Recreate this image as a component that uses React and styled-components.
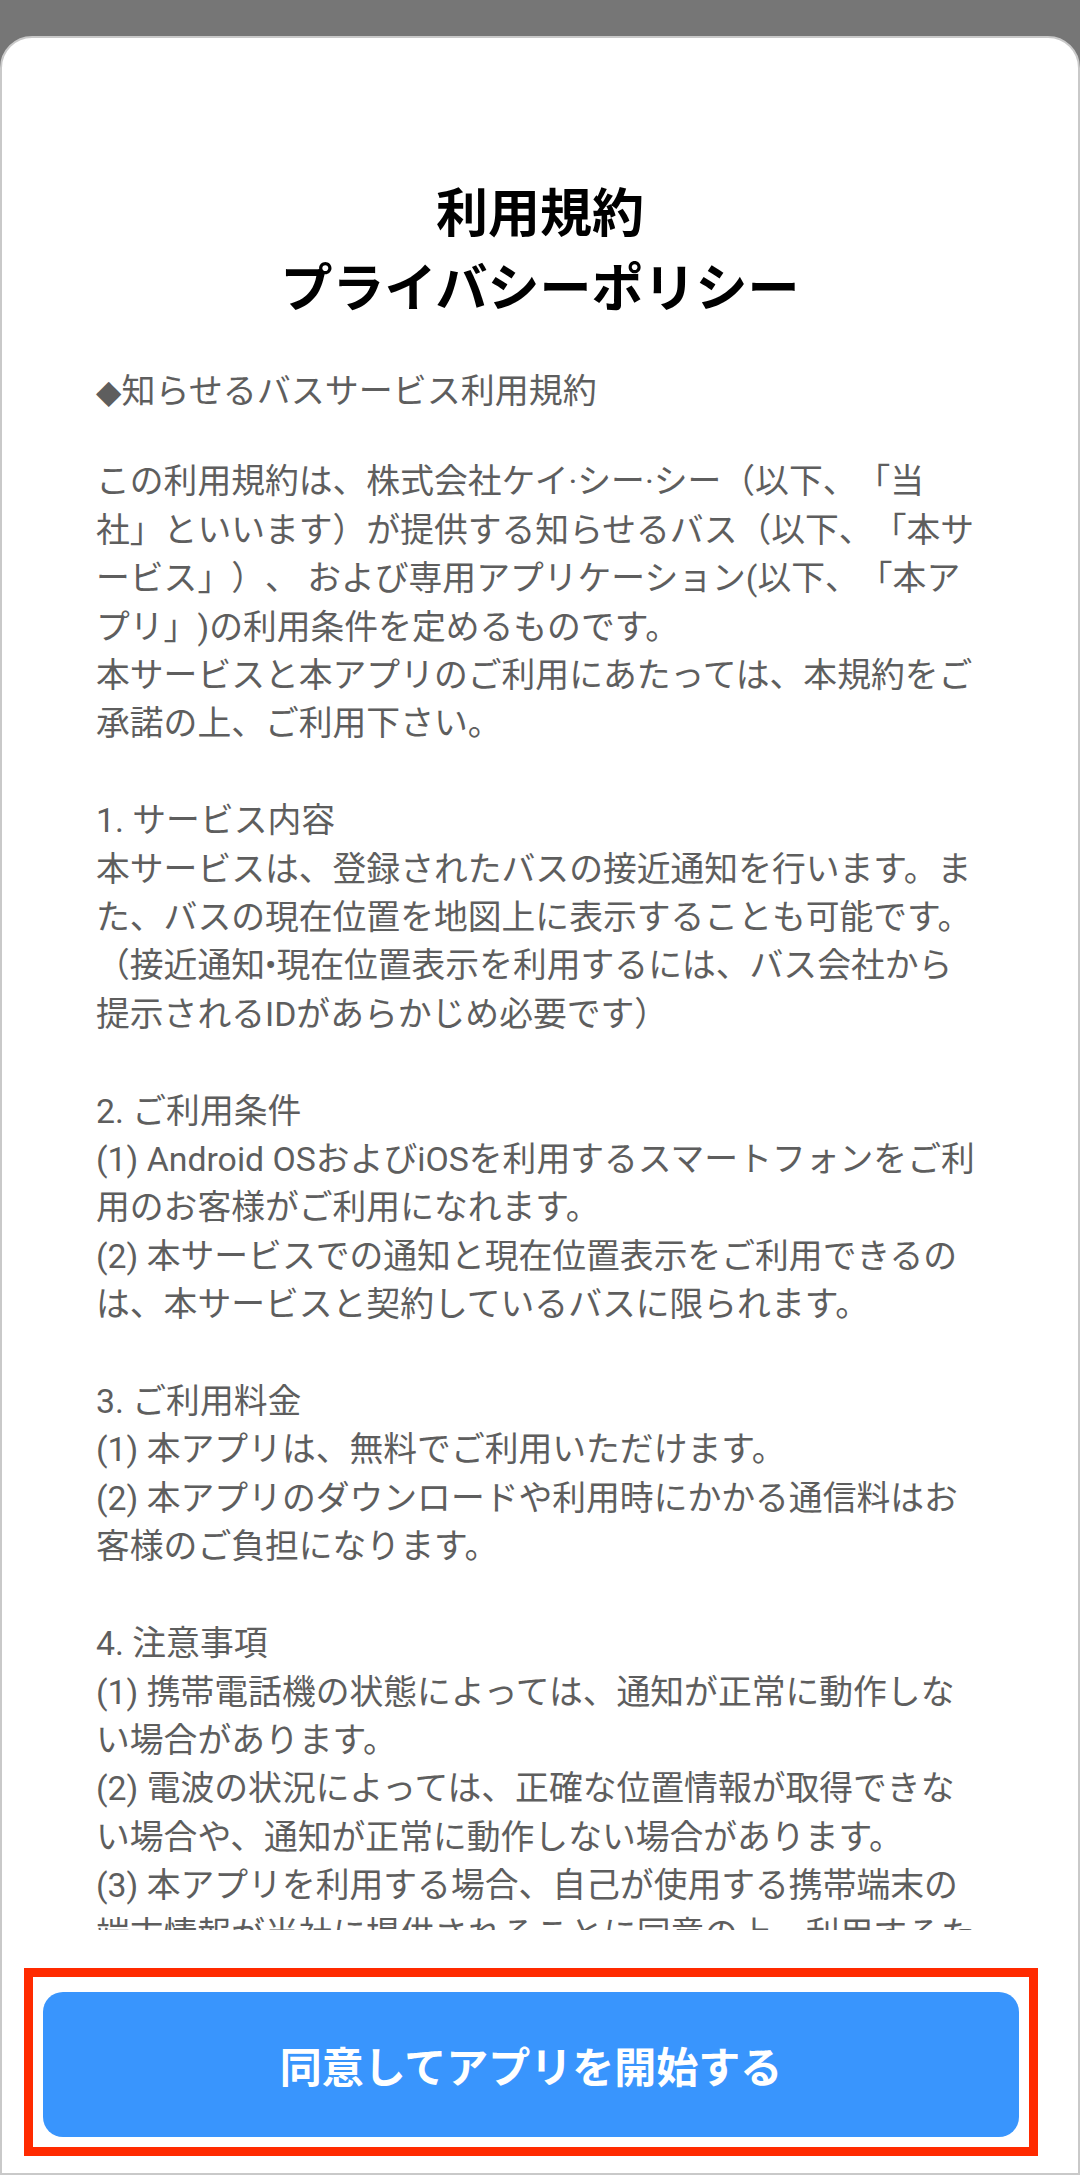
import React from "react";
import styled, { createGlobalStyle } from "styled-components";

const GlobalStyle = createGlobalStyle`
  html, body {
    margin: 0;
    padding: 0;
  }
  body {
    font-family: Roboto, "Noto Sans CJK JP", sans-serif;
    text-spacing-trim: space-all;
  }
`;

const sections = [
  [
    "この利用規約は、株式会社ケイ·シー·シー（以下、「当",
    "社」といいます）が提供する知らせるバス（以下、「本サ",
    "ービス」）、 および専用アプリケーション(以下、「本ア",
    "プリ」)の利用条件を定めるものです。",
    "本サービスと本アプリのご利用にあたっては、本規約をご",
    "承諾の上、ご利用下さい。",
  ],
  [
    "1. サービス内容",
    "本サービスは、登録されたバスの接近通知を行います。ま",
    "た、バスの現在位置を地図上に表示することも可能です。",
    "（接近通知•現在位置表示を利用するには、バス会社から",
    "提示されるIDがあらかじめ必要です）",
  ],
  [
    "2. ご利用条件",
    "(1) Android OSおよびiOSを利用するスマートフォンをご利",
    "用のお客様がご利用になれます。",
    "(2) 本サービスでの通知と現在位置表示をご利用できるの",
    "は、本サービスと契約しているバスに限られます。",
  ],
  [
    "3. ご利用料金",
    "(1) 本アプリは、無料でご利用いただけます。",
    "(2) 本アプリのダウンロードや利用時にかかる通信料はお",
    "客様のご負担になります。",
  ],
  [
    "4. 注意事項",
    "(1) 携帯電話機の状態によっては、通知が正常に動作しな",
    "い場合があります。",
    "(2) 電波の状況によっては、正確な位置情報が取得できな",
    "い場合や、通知が正常に動作しない場合があります。",
    "(3) 本アプリを利用する場合、自己が使用する携帯端末の",
    "端末情報が当社に提供されることに同意の上、利用するた",
  ],
];

const App = () => {
  return (
    <>
      <GlobalStyle />
      <Page>
        <Card>
          <ScrollArea>
            <Title>
              利用規約
              <br />
              プライバシーポリシー
            </Title>
            <Lead>
              <Diamond>◆</Diamond>知らせるバスサービス利用規約
            </Lead>
            <Body>
              {sections.map((lines, i) => (
                <Paragraph key={i}>
                  {lines.map((line, j) => (
                    <Line key={j}>{line}</Line>
                  ))}
                </Paragraph>
              ))}
            </Body>
          </ScrollArea>
          <Footer>
            <Highlight>
              <AgreeButton type="button">同意してアプリを開始する</AgreeButton>
            </Highlight>
          </Footer>
        </Card>
      </Page>
    </>
  );
};

const Page = styled.div`
  display: flex;
  flex-direction: column;
  min-height: 2175px;
  box-sizing: border-box;
  padding-top: 36px;
  background-color: #767676;
`;

const Card = styled.section`
  flex: 1;
  display: flex;
  flex-direction: column;
  background-color: #fff;
  border: 2px solid #c9c9c9;
  border-radius: 32px 32px 0 0;
`;

const ScrollArea = styled.div`
  height: 1892px;
  overflow: hidden;
  padding: 134px 94px 0;
  box-sizing: border-box;
`;

const Title = styled.h1`
  margin: 0;
  text-align: center;
  font-family: "Noto Sans CJK JP", sans-serif;
  font-size: 52px;
  font-weight: 700;
  line-height: 75px;
  color: #000;
`;

const Lead = styled.p`
  margin: 45px 0 0;
  font-size: 34px;
  line-height: 48.4px;
  color: #5e5e5e;
  white-space: nowrap;
`;

const Diamond = styled.span`
  font-family: "DejaVu Sans", sans-serif;
  font-size: 33px;
`;

const Body = styled.div`
  margin-top: 42px;
  font-size: 33.8px;
  line-height: 48.4px;
  color: #5e5e5e;
`;

const Paragraph = styled.p`
  margin: 0 0 48.4px;
`;

const Line = styled.span`
  display: block;
  white-space: nowrap;
`;

const Footer = styled.div`
  padding: 38px 40px 17px 22px;
`;

const Highlight = styled.div`
  border: 9px solid #ff2a00;
  padding: 15px 10px 10px;
`;

const AgreeButton = styled.button`
  display: flex;
  align-items: center;
  justify-content: center;
  width: 100%;
  height: 145px;
  border: none;
  border-radius: 20px;
  background-color: #3995fd;
  color: #fff;
  font-family: "Noto Sans CJK JP", sans-serif;
  font-size: 42px;
  font-weight: 700;
  cursor: pointer;
`;

export default App;
